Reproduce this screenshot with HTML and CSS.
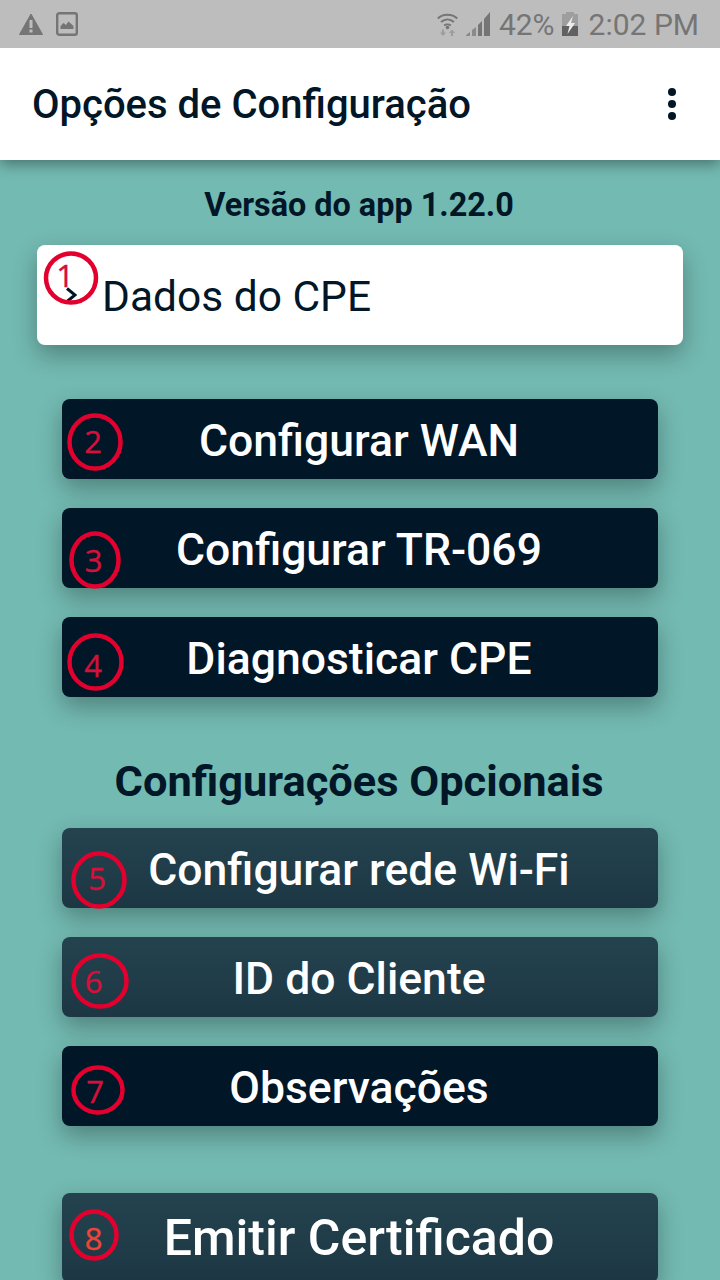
FILE: index.html
```html
<!DOCTYPE html>
<html lang="pt">
<head>
    <meta charset="UTF-8">
    <meta name="viewport" content="width=device-width, initial-scale=1.0">
    <title>Opções de Configuração</title>
    <link rel="stylesheet" href="styles.css">
</head>
<body>
<div class="screen">
    <div class="status-bar">
        <div class="status-left">
            <svg class="icon-alert" viewBox="0 0 24 22"><path fill="#757575" stroke="#757575" stroke-linejoin="round" d="M12 1 23.500 21.500H.5Z"/><rect x="10.500" y="7" width="3" height="8" fill="#bdbdbd"/><rect x="10.500" y="16.500" width="3" height="3" fill="#bdbdbd"/></svg>
            <svg class="icon-image" viewBox="0 0 22 24"><rect x="1.200" y="1.200" width="19.600" height="21.600" rx="2" fill="none" stroke="#757575" stroke-width="2.400"/><path fill="#757575" d="M4.500 17v-3l3-3 2.500 2 2.500-3.500 5 4.500v3Z"/></svg>
        </div>
        <div class="status-right">
            <svg class="icon-wifi" viewBox="0 0 21 24"><g fill="none" stroke="#757575" stroke-width="2"><path d="M.8 6.500C6 1.500 15 1.500 20.200 6.500"/><path d="M4 10C8 6.500 13 6.500 17 10"/><path d="M7.200 13.500C9 12 12 12 13.800 13.500"/></g><circle cx="10.500" cy="15.500" r="1.800" fill="#757575"/><path fill="#9c9c9c" d="M5 17.500h2v3h2l-3 3.500-3-3.500h2ZM14 24h2v-3h2l-3-3.500-3 3.500h2Z"/></svg>
            <svg class="icon-signal" viewBox="0 0 24 24"><path fill="#8a8a8a" d="M0 24v-1l4-3v4ZM6 24v-6l4-3v9Z"/><path fill="#757575" d="M12 24V13l4-4v15ZM18 24V7l6-7v24Z"/></svg>
            <span class="status-text status-percent">42%</span>
            <svg class="icon-battery" viewBox="0 0 16 24"><rect x="4" y="0" width="8" height="3" fill="#9e9e9e"/><rect x="0" y="2" width="16" height="22" fill="#9e9e9e"/><rect x="0" y="14" width="16" height="10" fill="#616161"/><path fill="#ededed" d="M11 4 4 14h3.500L5.500 22 13 11H9Z"/></svg>
            <span class="status-text">2:02 PM</span>
        </div>
    </div>

    <header class="toolbar">
        <h1 class="toolbar-title">Opções de Configuração</h1>
        <div class="menu-dots"><i></i><i></i><i></i></div>
    </header>

    <main class="content">
        <p class="version">Versão do app 1.22.0</p>
        <div class="card">
            <svg class="chevron" viewBox="0 0 12 16"><path d="M2 1.500 10 8 2 14.500" fill="none" stroke="#011627" stroke-width="3"/></svg>
            <span class="card-title">Dados do CPE</span>
        </div>

        <div class="button-group">
            <button class="btn">Configurar WAN</button>
            <button class="btn">Configurar TR-069</button>
            <button class="btn">Diagnosticar CPE</button>
        </div>

        <h2 class="section-title">Configurações Opcionais</h2>

        <div class="button-group">
            <button class="btn btn-light">Configurar rede Wi-Fi</button>
            <button class="btn btn-light">ID do Cliente</button>
            <button class="btn">Observações</button>
        </div>

        <button class="btn btn-light btn-large">Emitir Certificado</button>
    </main>

    <!-- marcacoes vermelhas por cima do print -->
    <svg class="marks" viewBox="0 0 720 1280">
        <g class="mark-rings">
            <ellipse cx="71" cy="278" rx="25" ry="24.500"/>
            <ellipse cx="95" cy="442" rx="25.500" ry="26.500"/>
            <ellipse cx="95" cy="560" rx="23.500" ry="26.500"/>
            <ellipse cx="95.500" cy="662" rx="26" ry="26.500"/>
            <ellipse cx="99" cy="880" rx="25.500" ry="26.500"/>
            <ellipse cx="100" cy="981" rx="26.500" ry="25.500"/>
            <ellipse cx="98" cy="1090" rx="24.500" ry="22.500"/>
            <ellipse cx="94" cy="1235" rx="22.500" ry="23.500"/>
        </g>
        <g class="mark-numbers">
            <text x="65" y="287">1</text>
            <text x="93" y="453">2</text>
            <text x="93.500" y="572">3</text>
            <text x="93" y="677">4</text>
            <text x="97" y="890">5</text>
            <text x="93.500" y="993">6</text>
            <text x="95" y="1103">7</text>
            <text x="93.500" y="1250" class="mark-light">8</text>
        </g>
    </svg>
</div>
</body>
</html>
```

FILE: styles.css
```css
html, body {
    margin: 0;
    padding: 0;
}

body {
    font-family: Roboto, sans-serif;
    color: #011627;
}

.screen {
    position: relative;
    width: 720px;
    height: 1280px;
    overflow: hidden;
    background-color: #73bab2;
}

.status-bar {
    position: relative;
    z-index: 1;
    height: 48px;
    display: flex;
    justify-content: space-between;
    align-items: center;
    padding: 0 21px 0 19px;
    background-color: #bdbdbd;
}

.status-left,
.status-right {
    display: flex;
    align-items: center;
}

.icon-alert {
    width: 24px;
    height: 22px;
}

.icon-image {
    width: 22px;
    height: 24px;
    margin-left: 13px;
}

.icon-wifi {
    width: 21px;
    height: 24px;
}

.icon-signal {
    width: 24px;
    height: 24px;
    margin-left: 8px;
}

.icon-battery {
    width: 16px;
    height: 24px;
    margin: 0 11px 0 7px;
}

.status-text {
    font-size: 30px;
    color: #757575;
}

.status-percent {
    margin-left: 9px;
}

.toolbar {
    height: 112px;
    box-sizing: border-box;
    padding: 0 44px 0 32px;
    display: flex;
    justify-content: space-between;
    align-items: center;
    background-color: #fff;
    box-shadow: 0 4px 14px rgba(0, 0, 0, 0.4);
    position: relative;
}

.toolbar-title {
    margin: 0;
    font-size: 40px;
    line-height: 48px;
    font-weight: 500;
    padding-top: 2px;
}

.menu-dots {
    display: flex;
    flex-direction: column;
    gap: 4px;
}

.menu-dots i {
    width: 8px;
    height: 8px;
    border-radius: 50%;
    background-color: #011627;
}

.content {
    display: flex;
    flex-direction: column;
    align-items: center;
}

.version {
    margin: 26px 2px 21px 0;
    font-size: 32.4px;
    line-height: 38px;
    font-weight: 700;
}

.card {
    width: 646px;
    height: 100px;
    box-sizing: border-box;
    display: flex;
    align-items: center;
    padding-left: 28px;
    background-color: #fff;
    border-radius: 8px;
    box-shadow: 0 10px 24px rgba(0, 0, 0, 0.3);
}

.chevron {
    width: 12px;
    height: 16px;
}

.card-title {
    font-size: 42.5px;
    margin-left: 25px;
    padding-top: 2px;
}

.button-group {
    display: flex;
    flex-direction: column;
    gap: 29px;
}

.card + .button-group {
    margin-top: 54px;
}

.btn {
    display: block;
    width: 596px;
    height: 80px;
    padding: 4px 2px 0 0;
    border: none;
    border-radius: 8px;
    font-family: Roboto, sans-serif;
    font-size: 44.5px;
    font-weight: 500;
    color: #fff;
    background-color: #011627;
    box-shadow: 0 10px 24px rgba(0, 0, 0, 0.3);
}

.btn-light {
    background-image: linear-gradient(#24434f, #1c3743);
    background-color: #1c3743;
}

.btn-large {
    height: 90px;
    padding-top: 0;
    margin-top: 67px;
    font-size: 50px;
}

.section-title {
    margin: 61px 2px 22px 0;
    font-size: 43.4px;
    line-height: 47px;
    font-weight: 700;
    padding-bottom: 1px;
}

.marks {
    position: absolute;
    left: 0;
    top: 0;
    width: 720px;
    height: 1280px;
}

.mark-rings ellipse {
    fill: none;
    stroke: #e4002e;
    stroke-width: 4.500;
}

.mark-numbers text {
    font-family: "Open Sans", sans-serif;
    font-size: 31px;
    fill: #d5103a;
    stroke: #d5103a;
    stroke-width: 0.4;
    text-anchor: middle;
}

.mark-numbers .mark-light {
    fill: #f04438;
    stroke: #f04438;
}
```
